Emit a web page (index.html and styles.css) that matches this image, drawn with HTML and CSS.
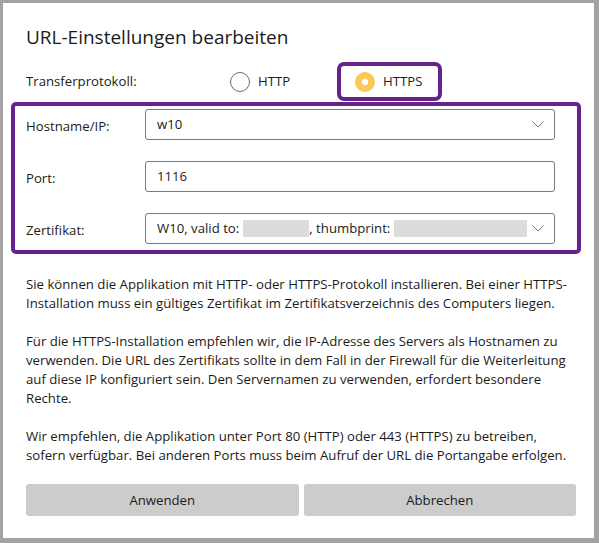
FILE: index.html
```html
<!DOCTYPE html>
<html lang="de">
<head>
<meta charset="utf-8">
<title>URL-Einstellungen bearbeiten</title>
<link rel="stylesheet" href="styles.css">
</head>
<body>
<div class="dialog">
  <h1 class="title">URL-Einstellungen bearbeiten</h1>

  <div class="proto-row">
    <span class="proto-label">Transferprotokoll:</span>
    <label class="radio-opt">
      <span class="radio"></span>
      <span>HTTP</span>
    </label>
    <label class="radio-opt radio-opt--highlight">
      <span class="radio radio--checked"></span>
      <span>HTTPS</span>
    </label>
  </div>

  <div class="fields">
    <div class="field-row">
      <span class="field-label">Hostname/IP:</span>
      <div class="input input--select">
        <span class="input-text">w10</span>
        <svg class="chevron" width="12" height="7" viewBox="0 0 12 7"><path d="M0.5 0.5 L6 6 L11.5 0.5" fill="none" stroke="#6a6a6a" stroke-width="0.9"/></svg>
      </div>
    </div>
    <div class="field-row">
      <span class="field-label">Port:</span>
      <div class="input">
        <span class="input-text">1116</span>
      </div>
    </div>
    <div class="field-row">
      <span class="field-label">Zertifikat:</span>
      <div class="input input--select">
        <span class="input-text">W10, valid to: <span class="redact redact--date"></span>, thumbprint: <span class="redact redact--thumb"></span></span>
        <svg class="chevron" width="12" height="7" viewBox="0 0 12 7"><path d="M0.5 0.5 L6 6 L11.5 0.5" fill="none" stroke="#6a6a6a" stroke-width="0.9"/></svg>
      </div>
    </div>
  </div>

  <div class="info">
    <p>Sie können die Applikation mit HTTP- oder HTTPS-Protokoll installieren. Bei einer HTTPS-<br>Installation muss ein gültiges Zertifikat im Zertifikatsverzeichnis des Computers liegen.</p>
    <p>Für die HTTPS-Installation empfehlen wir, die IP-Adresse des Servers als Hostnamen zu<br>verwenden. Die URL des Zertifikats sollte in dem Fall in der Firewall für die Weiterleitung<br>auf diese IP konfiguriert sein. Den Servernamen zu verwenden, erfordert besondere<br>Rechte.</p>
    <p>Wir empfehlen, die Applikation unter Port 80 (HTTP) oder 443 (HTTPS) zu betreiben,<br>sofern verfügbar. Bei anderen Ports muss beim Aufruf der URL die Portangabe erfolgen.</p>
  </div>

  <div class="buttons">
    <button class="btn">Anwenden</button>
    <button class="btn">Abbrechen</button>
  </div>
</div>
</body>
</html>
```

FILE: styles.css
```css
* { box-sizing: border-box; }

html, body {
  margin: 0;
  padding: 0;
}

body {
  width: 599px;
  height: 543px;
  background: #a3a3a3;
  padding: 3px 5px 5px 3px;
  font-family: "Open Sans", "Noto Sans", sans-serif;
  font-size: 13.2px;
  line-height: 19px;
  color: #1b1b1b;
  overflow: hidden;
}

.dialog {
  width: 591px;
  height: 535px;
  background: #ffffff;
  padding: 0 18px 0 23px;
  display: flex;
  flex-direction: column;
}

.title {
  margin: 21px 0 0 0;
  font-size: 19px;
  line-height: 26px;
  font-weight: 400;
  color: #1b1b1b;
}

.proto-row {
  margin-top: 12px;
  height: 39px;
  display: flex;
  align-items: center;
}

.proto-label {
  width: 204px;
}

.radio-opt {
  display: flex;
  align-items: center;
  gap: 8px;
  width: 107px;
  height: 39px;
}

.radio-opt--highlight {
  width: 105px;
  border: 4px solid #65228a;
  border-radius: 7px;
  padding-left: 14px;
}

.radio {
  width: 20px;
  height: 20px;
  border-radius: 50%;
  border: 1px solid #6b6b6b;
  background: #fff;
  flex: none;
}

.radio--checked {
  border: none;
  background: radial-gradient(circle, #ffffff 0 3px, #fcc956 3.6px);
}

.fields {
  margin: 1px 0 0 -15px;
  width: 570px;
  border: 4px solid #65228a;
  border-radius: 5px;
  padding: 3px 22px 6px 11px;
  display: flex;
  flex-direction: column;
  gap: 21px;
}

.field-row {
  display: flex;
  align-items: center;
  height: 31px;
}

.field-label {
  width: 119px;
  padding-top: 3px;
  flex: none;
}

.input {
  width: 410px;
  height: 31px;
  border: 1px solid #7a7a7a;
  border-radius: 3px;
  display: flex;
  align-items: center;
  padding: 0 10px 0 11px;
}

.input-text {
  flex: 1;
  min-width: 0;
  overflow: hidden;
  white-space: nowrap;
  display: flex;
  align-items: center;
}

.redact {
  display: inline-block;
  flex: none;
  height: 17px;
  background: #dcdcdc;
}

.redact--date {
  width: 66px;
  margin-left: 4px;
}

.redact--thumb {
  width: 133px;
  margin-left: 4px;
}

.chevron {
  flex: none;
  margin-left: 4px;
}

.info {
  margin-top: 21px;
  white-space: nowrap;
}

.info p {
  margin: 0 0 19px 0;
}

.info p:last-child {
  margin-bottom: 0;
}

.buttons {
  margin-top: 19px;
  display: flex;
  gap: 5px;
}

.btn {
  flex: 1;
  height: 32px;
  border: none;
  border-radius: 3px;
  background: #cccccc;
  font-family: inherit;
  font-size: 13.2px;
  color: #1b1b1b;
  padding: 0;
}
```
